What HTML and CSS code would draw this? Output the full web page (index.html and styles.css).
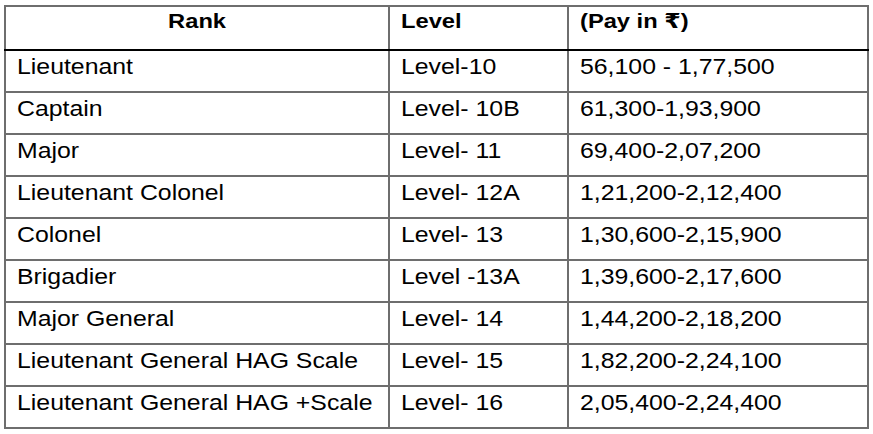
FILE: index.html
```html
<!DOCTYPE html>
<html>
<head>
<meta charset="utf-8">
<link rel="stylesheet" href="styles.css">
</head>
<body>
<table class="pay">
  <thead>
    <tr class="head">
      <th class="c-rank center"><span class="t">Rank</span></th>
      <th class="c-level"><span class="t">Level</span></th>
      <th class="c-pay"><span class="t">(Pay in ₹)</span></th>
    </tr>
  </thead>
  <tbody>
    <tr><td><span class="t">Lieutenant</span></td><td><span class="t">Level-10</span></td><td><span class="t">56,100 - 1,77,500</span></td></tr>
    <tr><td><span class="t">Captain</span></td><td><span class="t">Level- 10B</span></td><td><span class="t">61,300-1,93,900</span></td></tr>
    <tr><td><span class="t">Major</span></td><td><span class="t">Level- 11</span></td><td><span class="t">69,400-2,07,200</span></td></tr>
    <tr><td><span class="t">Lieutenant Colonel</span></td><td><span class="t">Level- 12A</span></td><td><span class="t">1,21,200-2,12,400</span></td></tr>
    <tr><td><span class="t">Colonel</span></td><td><span class="t">Level- 13</span></td><td><span class="t">1,30,600-2,15,900</span></td></tr>
    <tr><td><span class="t">Brigadier</span></td><td><span class="t">Level -13A</span></td><td><span class="t">1,39,600-2,17,600</span></td></tr>
    <tr><td><span class="t">Major General</span></td><td><span class="t">Level- 14</span></td><td><span class="t">1,44,200-2,18,200</span></td></tr>
    <tr><td><span class="t">Lieutenant General HAG Scale</span></td><td><span class="t">Level- 15</span></td><td><span class="t">1,82,200-2,24,100</span></td></tr>
    <tr><td><span class="t">Lieutenant General HAG +Scale</span></td><td><span class="t">Level- 16</span></td><td><span class="t">2,05,400-2,24,400</span></td></tr>
  </tbody>
</table>
</body>
</html>
```
FILE: styles.css
```css
html, body {
  margin: 0;
  padding: 0;
  background: #ffffff;
}
body {
  padding: 5px 0 0 4px;
  font-family: "Liberation Sans", Arial, "DejaVu Sans", sans-serif;
  color: #000;
}
.pay {
  border-collapse: collapse;
  width: 863px;
  table-layout: fixed;
  font-size: 21.5px;
  line-height: 24px;
}
.pay th, .pay td {
  border: 2px solid #6e6e6e;
  text-align: left;
  vertical-align: top;
  padding: 4px 11px 0 11px;
  height: 42px;
  box-sizing: border-box;
  white-space: nowrap;
  overflow: visible;
}
.pay th {
  font-weight: bold;
  font-size: 20.5px;
  height: 44px;
  padding-top: 2px;
  border-bottom: 2px solid #000;
}
.t {
  display: inline-block;
  transform: scaleX(1.155);
  transform-origin: left center;
}
.pay th .t {
  transform: scaleX(1.155);
}
.pay .center {
  text-align: center;
}
.pay .center .t {
  transform-origin: center center;
}
.c-rank { width: 384px; }
.c-level { width: 179px; }
.c-pay { width: 300px; }
```
